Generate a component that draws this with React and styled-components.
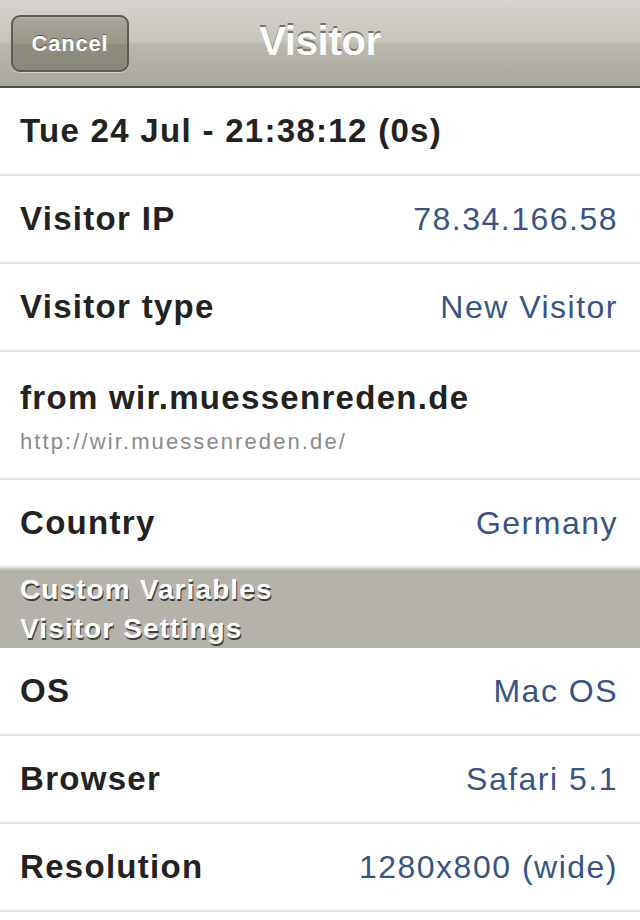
import React from 'react';
import styled, { createGlobalStyle } from 'styled-components';

const GlobalStyle = createGlobalStyle`
  html, body {
    margin: 0;
    padding: 0;
    background: #ffffff;
  }
  body {
    font-family: "Liberation Sans", Arial, Helvetica, sans-serif;
    -webkit-font-smoothing: antialiased;
  }
`;

const Screen = styled.div`
  width: 640px;
  min-height: 920px;
  background: #ffffff;
  display: flex;
  flex-direction: column;
`;

const NavBar = styled.div`
  position: relative;
  height: 86px;
  display: flex;
  align-items: center;
  justify-content: center;
  background: linear-gradient(
    to bottom,
    #d6d4ce 0%,
    #c6c4bc 48%,
    #bab8ae 52%,
    #a9a79c 100%
  );
  border-bottom: 2px solid #4f4e48;
`;

const CancelButton = styled.button`
  position: absolute;
  left: 11px;
  top: 15px;
  width: 118px;
  height: 57px;
  border-radius: 9px;
  border: 2px solid #5c5b54;
  background: linear-gradient(to bottom, #a8a69b 0%, #999789 50%, #8e8c7f 51%, #8a887b 100%);
  box-shadow: 0 1px 0 rgba(255, 255, 255, 0.45), inset 0 1px 1px rgba(255, 255, 255, 0.2);
  color: #ffffff;
  font-family: "Liberation Sans", Arial, sans-serif;
  font-weight: bold;
  font-size: 22px;
  letter-spacing: 0.8px;
  text-shadow: 0 -1px 0 rgba(60, 59, 52, 0.7);
  padding: 0;
`;

const Title = styled.h1`
  margin: -4px 0 0;
  color: #ffffff;
  font-size: 40px;
  font-weight: bold;
  text-shadow: 0 -2px 0 rgba(90, 89, 82, 0.75);
  letter-spacing: -0.3px;
`;

const Row = styled.div`
  box-sizing: border-box;
  height: ${(p) => (p.$tall ? 128 : 88)}px;
  padding: 0 22px 0 20px;
  display: flex;
  align-items: center;
  justify-content: space-between;
  border-bottom: 2px solid #e0e0e0;
`;

const Label = styled.div`
  color: #222222;
  font-weight: bold;
  font-size: 33px;
  letter-spacing: 1.3px;
`;

const Value = styled.div`
  color: #385487;
  font-size: 32px;
  letter-spacing: 1.5px;
`;

const Stack = styled.div`
  display: flex;
  flex-direction: column;
  gap: 12px;
  margin-top: 4px;
`;

const Subtitle = styled.div`
  color: #8a8a8a;
  font-size: 22px;
  letter-spacing: 2.1px;
`;

const SectionHeader = styled.div`
  box-sizing: border-box;
  height: 80px;
  padding: 0 20px;
  background: #b4b2aa;
  border-top: 2px solid #c9c8c2;
  color: #ffffff;
  font-weight: bold;
  font-size: 28px;
  line-height: 39px;
  text-shadow: 1px 2px 0 #3f3f3a;
  letter-spacing: 1.1px;
`;

const rowsTop = [
  { label: 'Visitor IP', value: '78.34.166.58' },
  { label: 'Visitor type', value: 'New Visitor' },
];

const rowsBottom = [
  { label: 'OS', value: 'Mac OS' },
  { label: 'Browser', value: 'Safari 5.1' },
  { label: 'Resolution', value: '1280x800 (wide)' },
];

export default function App() {
  return (
    <Screen>
      <GlobalStyle />
      <NavBar>
        <CancelButton>Cancel</CancelButton>
        <Title>Visitor</Title>
      </NavBar>

      <Row>
        <Label>Tue 24 Jul - 21:38:12 (0s)</Label>
      </Row>
      {rowsTop.map((r) => (
        <Row key={r.label}>
          <Label>{r.label}</Label>
          <Value>{r.value}</Value>
        </Row>
      ))}
      <Row $tall>
        <Stack>
          <Label>from wir.muessenreden.de</Label>
          <Subtitle>http://wir.muessenreden.de/</Subtitle>
        </Stack>
      </Row>
      <Row>
        <Label>Country</Label>
        <Value>Germany</Value>
      </Row>

      <SectionHeader>
        <div>Custom Variables</div>
        <div>Visitor Settings</div>
      </SectionHeader>

      {rowsBottom.map((r) => (
        <Row key={r.label}>
          <Label>{r.label}</Label>
          <Value>{r.value}</Value>
        </Row>
      ))}
    </Screen>
  );
}
